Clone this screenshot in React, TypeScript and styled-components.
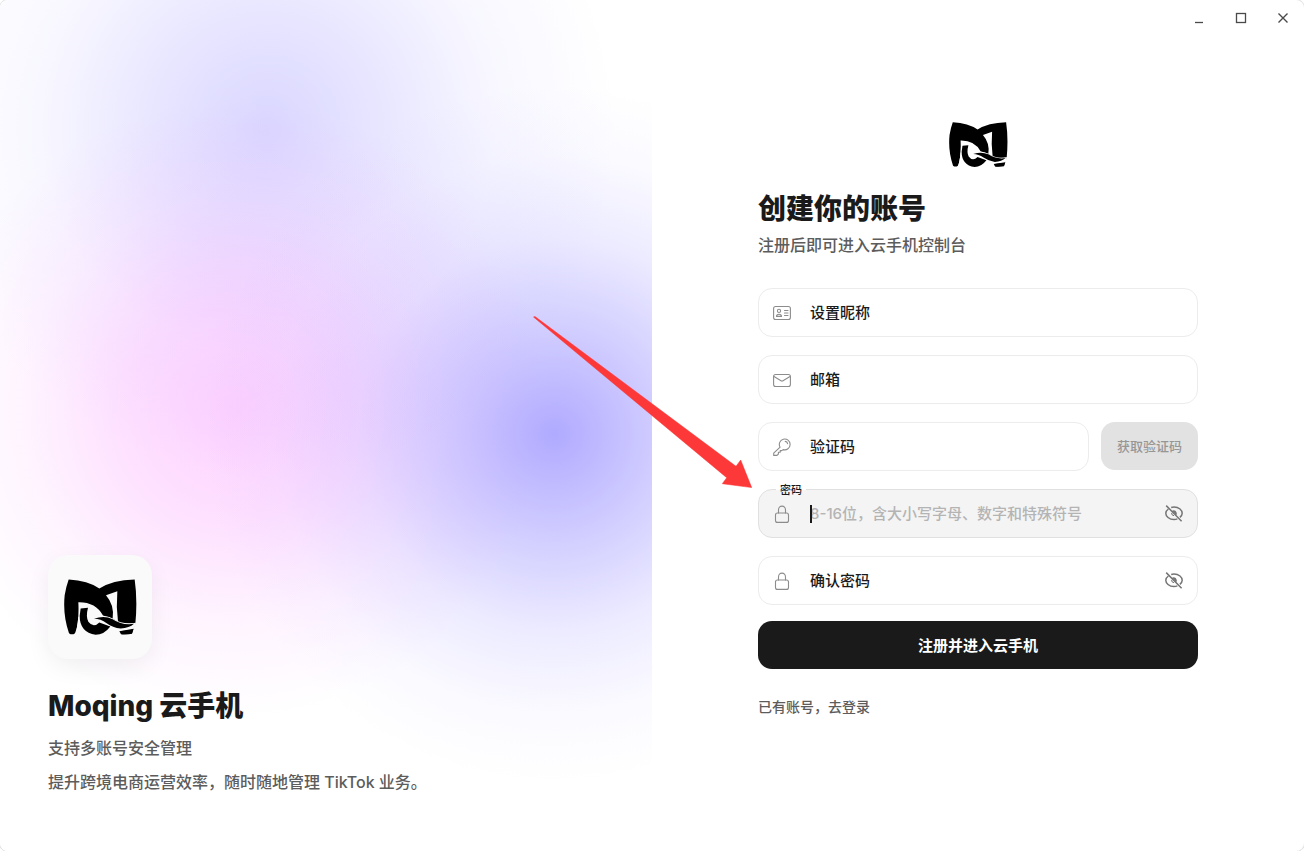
import React, { useState } from "react";
import styled, { createGlobalStyle, css } from "styled-components";

const GlobalStyle = createGlobalStyle`
  *, *::before, *::after { box-sizing: border-box; }
  body {
    margin: 0;
    background: #ffffff;
    color: #1a1a1a;
    font-family: Inter, "Noto Sans CJK SC", sans-serif;
  }
  button, input { font: inherit; }
`;

const Window = styled.main`
  display: grid;
  grid-template-columns: 1fr 1fr;
  min-height: 100vh;
  border-radius: 8px;
  overflow: hidden;
  background: #ffffff;
  box-shadow: 0 0 0 1px #e4e4e4;
`;

const BrandPanel = styled.section`
  display: flex;
  flex-direction: column;
  justify-content: flex-end;
  padding: 48px 48px 52px;
  background:
    radial-gradient(
      circle 350px at 85% 51%,
      rgba(110, 98, 255, 0.54),
      rgba(110, 98, 255, 0.33) 28%,
      rgba(110, 98, 255, 0.13) 56%,
      rgba(110, 98, 255, 0.03) 80%,
      rgba(110, 98, 255, 0)
    ),
    radial-gradient(
      circle 310px at 36% 48%,
      rgba(250, 130, 255, 0.36),
      rgba(250, 130, 255, 0.25) 35%,
      rgba(250, 130, 255, 0.09) 68%,
      rgba(250, 130, 255, 0)
    ),
    radial-gradient(
      circle 350px at 41% 15%,
      rgba(110, 98, 255, 0.26),
      rgba(110, 98, 255, 0.16) 32%,
      rgba(110, 98, 255, 0.05) 65%,
      rgba(110, 98, 255, 0)
    ),
    #ffffff;
`;

const BrandIcon = styled.div`
  display: flex;
  align-items: center;
  justify-content: center;
  width: 104px;
  height: 104px;
  border-radius: 20px;
  background: #fafafa;
  box-shadow: 0 8px 24px rgba(0, 0, 0, 0.06);
`;

const BrandTitle = styled.h1`
  margin: 27px 0 5px;
  font-size: 28px;
  line-height: 40px;
  font-weight: 800;
`;

const BrandText = styled.p`
  margin: 0;
  font-size: 16px;
  line-height: 34px;
  font-weight: 500;
  color: #5c5c5c;
`;

const FormPanel = styled.section`
  display: flex;
  flex-direction: column;
`;

const TitleBar = styled.header`
  display: flex;
  justify-content: flex-end;
`;

const WindowButton = styled.button`
  display: flex;
  align-items: center;
  justify-content: center;
  width: 42px;
  height: 36px;
  padding: 0;
  border: 0;
  background: none;
  color: #4a4a4a;
`;

const Content = styled.div`
  flex: 1;
  display: flex;
  flex-direction: column;
  justify-content: center;
  width: 100%;
  max-width: 488px;
  margin: 0 auto;
  padding: 0 24px 56px;
`;

const FormLogo = styled.div`
  display: flex;
  align-items: center;
  justify-content: center;
  height: 60px;
`;

const Heading = styled.h2`
  margin: 17px 0 7px;
  font-size: 28px;
  line-height: 36px;
  font-weight: 800;
`;

const Subtitle = styled.p`
  margin: 0 0 32px;
  font-size: 16px;
  line-height: 22px;
  font-weight: 500;
  color: #5c5c5c;
`;

const Form = styled.form`
  display: flex;
  flex-direction: column;
  gap: 18px;
`;

const CodeRow = styled.div`
  display: grid;
  grid-template-columns: 1fr 97px;
  gap: 12px;
`;

const FieldBox = styled.div<{ $active?: boolean }>`
  position: relative;
  display: grid;
  grid-template-columns: 18px 1fr auto;
  column-gap: 19px;
  align-items: center;
  height: 49px;
  padding: 0 14px;
  border: 1px solid ${(p) => (p.$active ? "#e0e0e0" : "#ececec")};
  border-radius: 14px;
  background: ${(p) => (p.$active ? "#f4f4f4" : "#ffffff")};
`;

const FieldLabel = styled.label<{ $floating?: boolean }>`
  ${(p) =>
    p.$floating
      ? css`
          position: absolute;
          top: -8px;
          left: 17px;
          padding: 0 4px;
          font-size: 11px;
          line-height: 16px;
          background: linear-gradient(#ffffff 8px, #f4f4f4 8px);
        `
      : css`
          grid-area: 1 / 2;
          font-size: 15px;
          line-height: 24px;
        `}
  font-weight: 500;
  color: #1a1a1a;
`;

const Input = styled.input`
  grid-area: 1 / 2;
  width: 100%;
  min-width: 0;
  height: 24px;
  padding: 0;
  border: 0;
  outline: 0;
  background: none;
  font-size: 15px;
  font-weight: 500;
  color: #1a1a1a;
  &::placeholder {
    color: #b4b4b4;
    opacity: 1;
  }
`;

const Caret = styled.span`
  grid-area: 1 / 2;
  width: 2px;
  height: 18px;
  background: #1a1a1a;
`;

const EyeButton = styled.button`
  grid-area: 1 / 3;
  display: flex;
  padding: 0;
  border: 0;
  background: none;
  color: #757575;
`;

const CodeButton = styled.button`
  height: 48px;
  padding: 0 0 2px;
  border: 0;
  border-radius: 14px;
  background: #e2e2e2;
  color: #969696;
  font-size: 13px;
  font-weight: 500;
`;

const SubmitButton = styled.button`
  height: 48px;
  margin-top: -2px;
  padding: 0 0 2px;
  border: 0;
  border-radius: 14px;
  background: #1a1a1a;
  color: #ffffff;
  font-size: 15px;
  font-weight: 700;
`;

const LoginLink = styled.a`
  align-self: flex-start;
  margin-top: 28px;
  font-size: 14px;
  line-height: 20px;
  font-weight: 500;
  color: #5c5c5c;
  text-decoration: none;
`;

const ArrowSvg = styled.svg`
  position: absolute;
  right: calc(100% + 7px);
  bottom: calc(100% + 2px);
  pointer-events: none;
`;

function Logo({ width, height, ground }: { width: number; height: number; ground: string }) {
  return (
    <svg width={width} height={height} viewBox="70 102 219 167" role="img" aria-label="Moqing">
      <path d="M84 103Q142 106 176 130Q215 105 282 103Q291 165 284 236L278 252L274 265L243 267L200 250L113 215Q110 250 103 264Q94 271 85 264Q66 210 72 150Q77 122 84 103Z" />
      <path
        fill={ground}
        d="M113 171Q165 170 187 211L205 216L245 237L286 234L280 253L240 258L243 270H104Q116 225 113 171Z"
      />
      <path fill={ground} d="M196 150L230 138Q226 185 232 230L216 220Q222 180 196 150Z" />
      <path d="M120 190L142 188Q135 214 143 230Q158 250 176 232L209 244Q190 269 165 269Q117 262 117 212Z" />
      <path d="M236 258L279 251L274 266Q258 269 241 267Z" />
      <path
        fill="#000"
        stroke={ground}
        strokeWidth="5"
        paintOrder="stroke"
        d="M160 221Q190 210 216 222Q244 241 280 236Q266 249 240 250Q216 247 198 234Q180 221 160 221Z"
      />
    </svg>
  );
}

const outline = {
  width: 18,
  height: 18,
  viewBox: "0 0 18 18",
  fill: "none",
  stroke: "#8c8c8c",
  strokeWidth: 1.1,
  strokeLinecap: "round" as const,
  strokeLinejoin: "round" as const,
  "aria-hidden": true,
};

const IdIcon = () => (
  <svg {...outline}>
    <rect x="0.6" y="2.5" width="16.8" height="13" rx="2" />
    <circle cx="6" cy="6.9" r="1.6" />
    <path d="M3.5 12.4C3.5 10.6 4.5 10.2 6 10.2S8.5 10.6 8.5 12.4ZM11.5 6.5H15M11.5 9H15M11.5 11.5H15" />
  </svg>
);

const MailIcon = () => (
  <svg {...outline}>
    <rect x="0.6" y="3.5" width="16.8" height="12" rx="2" />
    <path d="M1 5.5L8 9.8Q9 10.4 10 9.8L17 5.5" />
  </svg>
);

const KeyIcon = () => (
  <svg {...outline}>
    <path d="M7.1 9.2A5.4 5.4 0 1 1 10.2 11.6L8.8 12.6H7.2V14.3H5.4V16L4 17.4H.7V15.2Z" />
    <path d="M12.2 3.4Q14.2 3.6 14.6 5.6" />
  </svg>
);

const LockIcon = () => (
  <svg {...outline}>
    <rect x="2.5" y="8" width="13" height="9.4" rx="2" />
    <path d="M5.5 8V4.9A3.5 3.8 0 0 1 12.5 4.9V8" />
  </svg>
);

const EyeOffIcon = () => (
  <svg width="18" height="18" viewBox="0 0 18 18" fill="none" stroke="currentColor" strokeWidth="1.5" aria-hidden>
    <path d="M6.2 2.5Q7.5 2 9 2C14 2 17.2 5.3 17.2 8.2Q17.2 10.3 14.9 12.4M12.4 13.9Q10.8 14.5 9 14.5C4 14.5.8 11.2.8 8.2Q.8 5.8 3.4 4" />
    <path d="M1.2 .6L16.6 16.2M7.6 6.2Q11 5.4 11.2 9.6" />
    <path d="M8 6.5L11 9.4Q10.9 5.9 8 6.5Z" fill="currentColor" strokeWidth="0.5" />
    <path d="M6.6 8Q6.4 10.4 9 10.7" strokeWidth="1" />
  </svg>
);

function Field(props: {
  id: string;
  label: string;
  icon: React.ReactNode;
  type?: string;
  placeholder?: string;
  active?: boolean;
  secret?: boolean;
  children?: React.ReactNode;
}) {
  const [value, setValue] = useState("");
  const [visible, setVisible] = useState(false);
  const type = props.secret ? (visible ? "text" : "password") : props.type ?? "text";
  return (
    <FieldBox $active={props.active}>
      {props.icon}
      {(props.active || value === "") && (
        <FieldLabel htmlFor={props.id} $floating={props.active}>
          {props.label}
        </FieldLabel>
      )}
      <Input
        id={props.id}
        type={type}
        aria-label={props.label}
        placeholder={props.placeholder}
        value={value}
        onChange={(e) => setValue(e.target.value)}
      />
      {props.active && value === "" && <Caret />}
      {props.secret && (
        <EyeButton type="button" aria-label="显示密码" onClick={() => setVisible(!visible)}>
          <EyeOffIcon />
        </EyeButton>
      )}
      {props.children}
    </FieldBox>
  );
}

const Arrow = () => (
  <ArrowSvg width="219" height="172" viewBox="0 0 219 172" aria-hidden>
    <path fill="#fd3838" stroke="#fd3838" strokeWidth="0.5" d="M0.5 1L2 0.5L203 150.3L207.7 144L218.7 171.6L189.3 167.7L193.7 161.7Z" />
  </ArrowSvg>
);

export default function App() {
  return (
    <>
      <GlobalStyle />
      <Window>
        <BrandPanel>
          <BrandIcon>
            <Logo width={73} height={56} ground="#fafafa" />
          </BrandIcon>
          <BrandTitle>Moqing 云手机</BrandTitle>
          <BrandText>支持多账号安全管理</BrandText>
          <BrandText>提升跨境电商运营效率，随时随地管理 TikTok 业务。</BrandText>
        </BrandPanel>
        <FormPanel>
          <TitleBar>
            <WindowButton aria-label="最小化">
              <svg width="12" height="12" viewBox="0 0 12 12" stroke="currentColor">
                <path d="M2 10.5H10" strokeWidth="1.3" />
              </svg>
            </WindowButton>
            <WindowButton aria-label="最大化">
              <svg width="12" height="12" viewBox="0 0 12 12" fill="none" stroke="currentColor">
                <rect x="1.5" y="1.5" width="9" height="9" strokeWidth="1.3" />
              </svg>
            </WindowButton>
            <WindowButton aria-label="关闭">
              <svg width="12" height="12" viewBox="0 0 12 12" stroke="currentColor" strokeWidth="1.4">
                <path d="M1.5 1.5L10.5 10.5M10.5 1.5L1.5 10.5" />
              </svg>
            </WindowButton>
          </TitleBar>
          <Content>
            <FormLogo>
              <Logo width={59} height={45} ground="#ffffff" />
            </FormLogo>
            <Heading>创建你的账号</Heading>
            <Subtitle>注册后即可进入云手机控制台</Subtitle>
            <Form onSubmit={(e) => e.preventDefault()}>
              <Field id="nickname" label="设置昵称" icon={<IdIcon />} />
              <Field id="email" label="邮箱" type="email" icon={<MailIcon />} />
              <CodeRow>
                <Field id="code" label="验证码" icon={<KeyIcon />} />
                <CodeButton type="button">获取验证码</CodeButton>
              </CodeRow>
              <Field
                id="password"
                label="密码"
                placeholder="8-16位，含大小写字母、数字和特殊符号"
                icon={<LockIcon />}
                active
                secret
              >
                <Arrow />
              </Field>
              <Field id="confirm" label="确认密码" icon={<LockIcon />} secret />
              <SubmitButton type="submit">注册并进入云手机</SubmitButton>
            </Form>
            <LoginLink href="#login">已有账号，去登录</LoginLink>
          </Content>
        </FormPanel>
      </Window>
    </>
  );
}
